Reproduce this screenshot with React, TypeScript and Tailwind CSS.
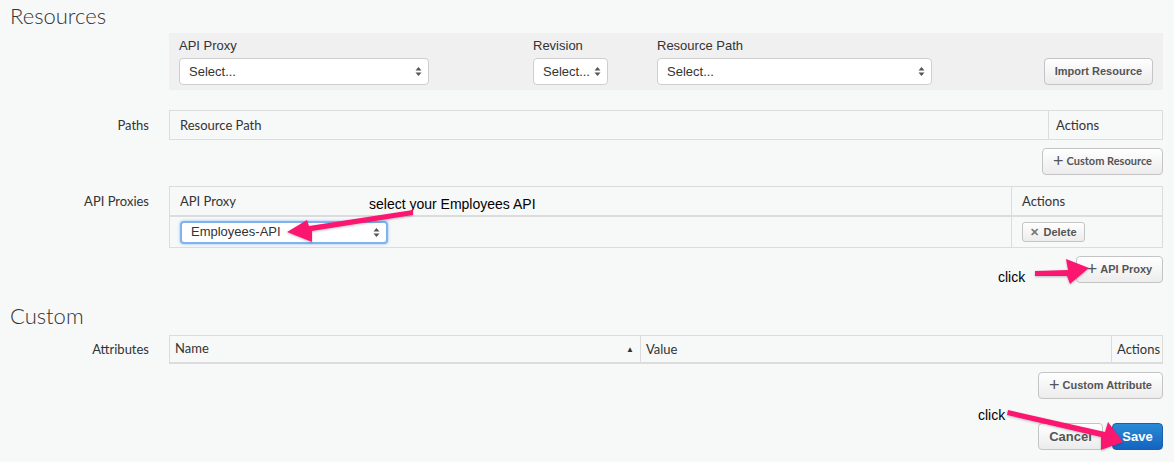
import React from "react";

const Chevrons = () => (
  <svg width="7" height="11" viewBox="0 0 7 11" className="shrink-0">
    <path d="M3.5 1 L6.5 4.5 L0.5 4.5 Z" fill="#555" />
    <path d="M3.5 10 L6.5 6.5 L0.5 6.5 Z" fill="#555" />
  </svg>
);

const Select = ({ w, text, focus }: { w: string; text: string; focus?: boolean }) => (
  <div
    className={`${w} flex items-center justify-between bg-white rounded-[4px] pl-[9px] pr-[6px] text-[13px] text-[#333] ${
      focus
        ? "border-2 border-[#7fb2ee] shadow-[0_0_3px_#8bbcf3] h-[23px] pl-[8px]"
        : "border border-[#cfcfcf] h-[27px]"
    }`}
    style={{ fontFamily: "'Liberation Sans', Arial, sans-serif" }}
  >
    <span>{text}</span>
    <Chevrons />
  </div>
);

const Btn = ({ w, children }: { w: string; children: React.ReactNode }) => (
  <div
    className={`${w} h-[27px] flex items-center justify-center gap-[3px] rounded-[4px] border border-[#c4c4c4] bg-gradient-to-b from-white to-[#ececec] text-[11px] font-bold text-[#555]`}
    style={{ fontFamily: "'Liberation Sans', Arial, sans-serif" }}
  >
    {children}
  </div>
);

const Plus = () => <span className="text-[18px] font-normal leading-none text-[#555] -mt-[2px]">+</span>;

const Label = ({ children, className = "" }: { children: React.ReactNode; className?: string }) => (
  <div className={`w-[169px] shrink-0 pr-[20px] text-right text-[13px] text-[#333] ${className}`}>{children}</div>
);

export default function App() {
  return (
    <div
      className="relative w-[1174px] h-[462px] overflow-hidden bg-[#f7f8f8] text-[#333]"
      style={{ fontFamily: "Lato, 'Open Sans', sans-serif" }}
    >
      <h1 className="pl-[10px] pt-[2px] h-[33px] text-[22px] font-light leading-[28px] text-[#333]">Resources</h1>

      <div className="ml-[169px] mr-[11px] h-[57px] bg-[#f0f0f0] flex pl-[10px] pr-[10px] pt-[5px]">
        <div className="w-[354px]">
          <div className="h-[20px] text-[13px] leading-[16px]" style={{ fontFamily: "'Liberation Sans', Arial, sans-serif" }}>API Proxy</div>
          <Select w="w-[250px]" text="Select..." />
        </div>
        <div className="w-[124px]">
          <div className="h-[20px] text-[13px] leading-[16px]" style={{ fontFamily: "'Liberation Sans', Arial, sans-serif" }}>Revision</div>
          <Select w="w-[75px]" text="Select..." />
        </div>
        <div className="w-[275px]">
          <div className="h-[20px] text-[13px] leading-[16px]" style={{ fontFamily: "'Liberation Sans', Arial, sans-serif" }}>Resource Path</div>
          <Select w="w-[275px]" text="Select..." />
        </div>
        <div className="flex-1 flex justify-end pt-[20px]">
          <Btn w="w-[109px]">Import Resource</Btn>
        </div>
      </div>

      <div className="flex mt-[20px] mr-[11px]">
        <Label className="leading-[30px]">Paths</Label>
        <div className="flex-1 flex h-[30px] border border-[#dcdcdc] text-[13px]">
          <div className="flex-1 pl-[10px] leading-[28px]">Resource Path</div>
          <div className="w-[114px] border-l border-[#dcdcdc] pl-[7px] leading-[28px]">Actions</div>
        </div>
      </div>

      <div className="flex justify-end mr-[11px] mt-[8px]">
        <Btn w="w-[121px]">
          <Plus />
          <span style={{ fontFamily: "Lato, sans-serif" }}>Custom Resource</span>
        </Btn>
      </div>

      <div className="flex mt-[11px] mr-[11px]">
        <Label className="leading-[30px]">API Proxies</Label>
        <div className="flex-1 border border-[#dcdcdc] text-[13px]">
          <div className="flex h-[30px] border-b-2 border-[#dcdcdc]">
            <div className="flex-1 pl-[10px] leading-[28px]">API Proxy</div>
            <div className="w-[151px] border-l border-[#dcdcdc] pl-[10px] leading-[28px]">Actions</div>
          </div>
          <div className="flex h-[30px]">
            <div className="flex-1 pl-[10px] flex items-center">
              <Select w="w-[208px]" text="Employees-API" focus />
            </div>
            <div className="w-[151px] border-l border-[#dcdcdc] pl-[10px] flex items-center">
              <div
                className="w-[63px] h-[20px] flex items-center justify-center gap-[4px] rounded-[3px] border border-[#c4c4c4] bg-gradient-to-b from-white to-[#ececec] text-[11px] font-bold text-[#555]"
                style={{ fontFamily: "'Liberation Sans', Arial, sans-serif" }}
              >
                <span className="text-[11px] text-[#777]">✕</span>Delete
              </div>
            </div>
          </div>
        </div>
      </div>

      <div className="flex justify-end mr-[11px] mt-[8px]">
        <Btn w="w-[87px]">
          <Plus />
          <span>API Proxy</span>
        </Btn>
      </div>

      <h2 className="pl-[10px] mt-[20px] h-[31px] text-[22px] font-light leading-[26px] text-[#333]">Custom</h2>

      <div className="flex mr-[11px] mt-[1px]">
        <Label className="leading-[29px]">Attributes</Label>
        <div className="flex-1 flex h-[29px] border border-[#dcdcdc] border-b-2 text-[13px]">
          <div className="w-[470px] pl-[5px] pr-[6px] flex items-center justify-between">
            <span>Name</span>
            <span className="text-[8px] text-[#333]">▲</span>
          </div>
          <div className="flex-1 border-l border-[#dcdcdc] pl-[5px] leading-[26px]">Value</div>
          <div className="w-[51px] border-l border-[#dcdcdc] pl-[5px] leading-[26px]">Actions</div>
        </div>
      </div>

      <div className="flex justify-end mr-[11px] mt-[8px]">
        <Btn w="w-[125px]">
          <Plus />
          <span>Custom Attribute</span>
        </Btn>
      </div>

      <div className="flex justify-end gap-[9px] mr-[11px] mt-[24px]">
        <div
          className="w-[65px] h-[27px] flex items-center justify-center rounded-[4px] border border-[#c4c4c4] bg-gradient-to-b from-white to-[#ececec] text-[13px] font-bold text-[#555]"
          style={{ fontFamily: "'Liberation Sans', Arial, sans-serif" }}
        >
          Cancel
        </div>
        <div
          className="w-[51px] h-[27px] flex items-center justify-center rounded-[4px] border border-[#1a5fae] bg-gradient-to-b from-[#2a8ad6] to-[#1464c0] text-[13px] font-bold text-white"
          style={{ fontFamily: "'Liberation Sans', Arial, sans-serif" }}
        >
          Save
        </div>
      </div>

      {/* annotations */}
      <div
        className="absolute left-[369px] top-[194px] text-[14px] text-black"
        style={{ fontFamily: "'Liberation Sans', Arial, sans-serif" }}
      >
        select your Employees API
      </div>
      <div
        className="absolute left-[998px] top-[267px] text-[14px] text-black"
        style={{ fontFamily: "'Liberation Sans', Arial, sans-serif" }}
      >
        click
      </div>
      <div
        className="absolute left-[978px] top-[405px] text-[14px] text-black"
        style={{ fontFamily: "'Liberation Sans', Arial, sans-serif" }}
      >
        click
      </div>
      <svg className="absolute left-0 top-0 pointer-events-none" width="1174" height="462">
        <defs>
          <filter id="sh" x="-10%" y="-50%" width="120%" height="200%">
            <feDropShadow dx="0" dy="1" stdDeviation="1" floodColor="#000" floodOpacity="0.25" />
          </filter>
        </defs>
        <g fill="#fb1670" filter="url(#sh)">
          <path d="M413 210 L413 215 L312 231 L312 242 L287 232 L307 220 L309 226 Z" />
          <path d="M1035 271 L1035 276 L1067 276 L1070 284 L1089 268 L1066 259 L1068 270 Z" />
          <path d="M1008 410 L1007 415 L1101 437 L1101 450 L1123 442 L1108 422 L1105 432 Z" />
        </g>
      </svg>
    </div>
  );
}
